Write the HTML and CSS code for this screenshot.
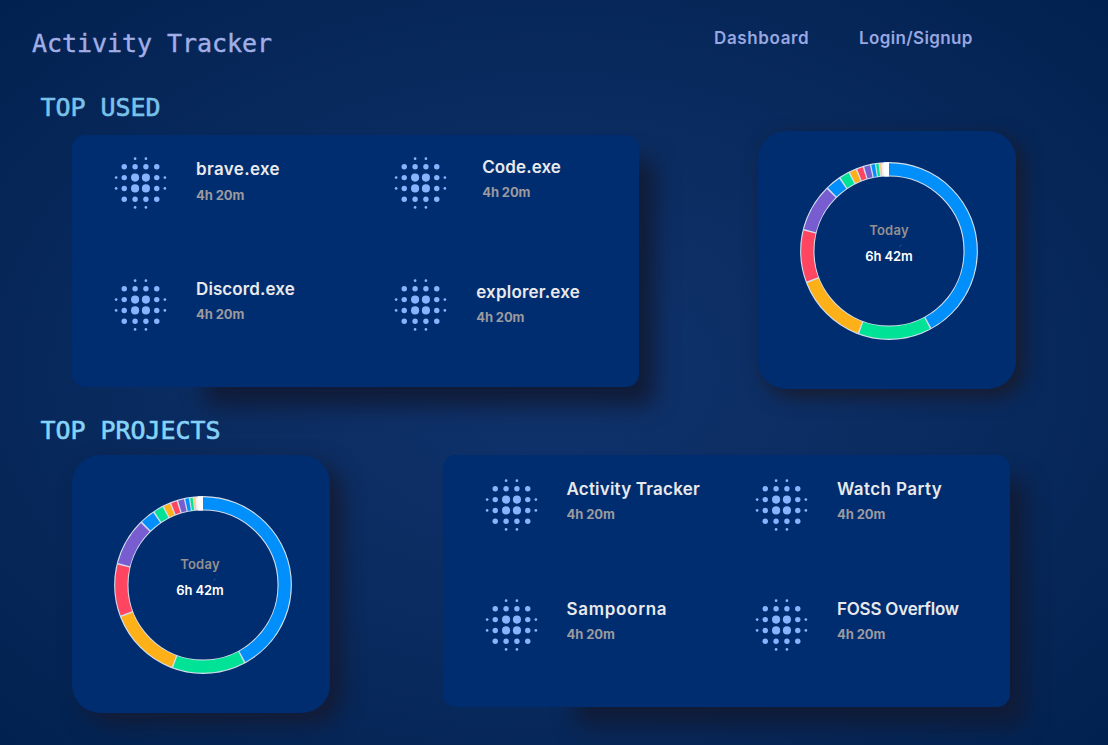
FILE: index.html
```html
<!DOCTYPE html>
<html lang="en">
<head>
<meta charset="utf-8">
<title>Activity Tracker</title>
<link rel="stylesheet" href="styles.css">
</head>
<body>
<svg class="defs" width="0" height="0">
  <symbol id="blur" viewBox="0 0 24 24">
    <g fill="#86b4ff">
      <circle cx="10" cy="10" r="1.5"/><circle cx="14" cy="10" r="1.5"/><circle cx="10" cy="14" r="1.5"/><circle cx="14" cy="14" r="1.5"/>
      <circle cx="6" cy="6" r="1"/><circle cx="10" cy="6" r="1"/><circle cx="14" cy="6" r="1"/><circle cx="18" cy="6" r="1"/>
      <circle cx="6" cy="10" r="1"/><circle cx="18" cy="10" r="1"/><circle cx="6" cy="14" r="1"/><circle cx="18" cy="14" r="1"/>
      <circle cx="6" cy="18" r="1"/><circle cx="10" cy="18" r="1"/><circle cx="14" cy="18" r="1"/><circle cx="18" cy="18" r="1"/>
      <circle cx="10" cy="3" r=".5"/><circle cx="14" cy="3" r=".5"/><circle cx="10" cy="21" r=".5"/><circle cx="14" cy="21" r=".5"/>
      <circle cx="3" cy="10" r=".5"/><circle cx="3" cy="14" r=".5"/><circle cx="21" cy="10" r=".5"/><circle cx="21" cy="14" r=".5"/>
    </g>
  </symbol>
  <symbol id="donut" viewBox="0 0 178 178">
    <g fill="none" transform="rotate(-90 89 89)">
      <circle cx="89" cy="89" r="81.7" stroke="#d3deec" stroke-width="14.4"/>
      <g stroke-width="12.2">
        <circle cx="89" cy="89" r="81.7" pathLength="360" stroke="#008ffb" stroke-dasharray="151.1 360" stroke-dashoffset="0"/>
        <circle cx="89" cy="89" r="81.7" pathLength="360" stroke="#00e396" stroke-dasharray="47.8 360" stroke-dashoffset="-152.1"/>
        <circle cx="89" cy="89" r="81.7" pathLength="360" stroke="#feb019" stroke-dasharray="47.7 360" stroke-dashoffset="-200.9"/>
        <circle cx="89" cy="89" r="81.7" pathLength="360" stroke="#ff4560" stroke-dasharray="33.9 360" stroke-dashoffset="-249.6"/>
        <circle cx="89" cy="89" r="81.7" pathLength="360" stroke="#775dd0" stroke-dasharray="30.5 360" stroke-dashoffset="-284.5"/>
        <circle cx="89" cy="89" r="81.7" pathLength="360" stroke="#008ffb" stroke-dasharray="9.5 360" stroke-dashoffset="-316"/>
        <circle cx="89" cy="89" r="81.7" pathLength="360" stroke="#00e396" stroke-dasharray="6.1 360" stroke-dashoffset="-326.5"/>
        <circle cx="89" cy="89" r="81.7" pathLength="360" stroke="#feb019" stroke-dasharray="4.2 360" stroke-dashoffset="-333.6"/>
        <circle cx="89" cy="89" r="81.7" pathLength="360" stroke="#ff4560" stroke-dasharray="3.7 360" stroke-dashoffset="-338.8"/>
        <circle cx="89" cy="89" r="81.7" pathLength="360" stroke="#775dd0" stroke-dasharray="3.9 360" stroke-dashoffset="-343.5"/>
        <circle cx="89" cy="89" r="81.7" pathLength="360" stroke="#008ffb" stroke-dasharray="2.4 360" stroke-dashoffset="-348.3"/>
        <circle cx="89" cy="89" r="81.7" pathLength="360" stroke="#00e396" stroke-dasharray="1.6 360" stroke-dashoffset="-351.5"/>
        <circle cx="89" cy="89" r="81.7" pathLength="360" stroke="#fecf78" stroke-dasharray="1 360" stroke-dashoffset="-353.8"/>
        <circle cx="89" cy="89" r="81.7" pathLength="360" stroke="#fbeef4" stroke-dasharray="1.8 360" stroke-dashoffset="-355"/>
        <circle cx="89" cy="89" r="81.7" pathLength="360" stroke="#ffffff" stroke-width="14.2" stroke-dasharray="3.6 360" stroke-dashoffset="-356.4"/>
      </g>
    </g>
    <path d="M99.5 84.5l2-1.5" stroke="#3c5f8f" stroke-width=".8"/>
  </symbol>
</svg>

<header class="topbar">
  <h1 class="mono title">Activity Tracker</h1>
  <nav class="nav">
    <a class="nav-dash">Dashboard</a>
    <a class="nav-login">Login/Signup</a>
  </nav>
</header>

<main>
  <section class="used">
    <h2 class="mono heading">TOP USED</h2>
    <div class="row">
      <div class="card list apps">
        <div class="item brave"><svg class="icon"><use href="#blur"/></svg><div class="info"><p class="name">brave.exe</p><p class="time">4h 20m</p></div></div>
        <div class="item code"><svg class="icon"><use href="#blur"/></svg><div class="info"><p class="name">Code.exe</p><p class="time">4h 20m</p></div></div>
        <div class="item discord"><svg class="icon"><use href="#blur"/></svg><div class="info"><p class="name">Discord.exe</p><p class="time">4h 20m</p></div></div>
        <div class="item explorer"><svg class="icon"><use href="#blur"/></svg><div class="info"><p class="name">explorer.exe</p><p class="time">4h 20m</p></div></div>
      </div>
      <div class="card chart">
        <svg class="ring"><use href="#donut"/></svg>
        <div class="label"><p class="today">Today</p><p class="total">6h 42m</p></div>
      </div>
    </div>
  </section>

  <section class="projects">
    <h2 class="mono heading">TOP PROJECTS</h2>
    <div class="row">
      <div class="card chart">
        <svg class="ring"><use href="#donut"/></svg>
        <div class="label"><p class="today">Today</p><p class="total">6h 42m</p></div>
      </div>
      <div class="card list">
        <div class="item tracker"><svg class="icon"><use href="#blur"/></svg><div class="info"><p class="name">Activity Tracker</p><p class="time">4h 20m</p></div></div>
        <div class="item watch"><svg class="icon"><use href="#blur"/></svg><div class="info"><p class="name">Watch Party</p><p class="time">4h 20m</p></div></div>
        <div class="item sampoorna"><svg class="icon"><use href="#blur"/></svg><div class="info"><p class="name">Sampoorna</p><p class="time">4h 20m</p></div></div>
        <div class="item foss"><svg class="icon"><use href="#blur"/></svg><div class="info"><p class="name">FOSS Overflow</p><p class="time">4h 20m</p></div></div>
      </div>
    </div>
  </section>
</main>
</body>
</html>
```
FILE: styles.css
```css
* { box-sizing: border-box; margin: 0; padding: 0; }
html { height: 100%; }
body {
  height: 745px;
  overflow: hidden;
  background: radial-gradient(ellipse farthest-corner at 50% 50%, #10336d 0%, #0a2b5f 50%, #012150 100%);
  font-family: Inter, "Open Sans", sans-serif;
  font-weight: 600;
  white-space: nowrap;
}
.defs { display: block; }
.mono {
  font: 400 25px/30px "DejaVu Sans Mono", monospace;
  letter-spacing: -0.05px;
}
.topbar {
  display: flex;
  height: 93px;
  padding: 29px 0 0 32px;
}
.title { width: 682px; color: #a2aee6; -webkit-text-stroke: .4px #a2aee6; }
.nav {
  display: flex;
  color: #98a7e0;
  font-size: 17px;
  line-height: 24px;
  margin-top: -3px;
}
.nav-dash { width: 145px; letter-spacing: .62px; }
.nav-login { letter-spacing: .35px; }
.heading { padding-left: 40.5px; color: #78c2ea; -webkit-text-stroke: .6px #78c2ea; }
.projects .heading { color: #85d3f8; -webkit-text-stroke-color: #85d3f8; }
.row {
  display: flex;
  align-items: flex-start;
  padding: 8px 0 0 72px;
  gap: 119px;
}
.projects { padding-top: 27px; }
.projects .row { padding-top: 9px; gap: 113px; }
.card { position: relative; background: #002d6f; }

.list {
  display: grid;
  grid-template-columns: 270.5px 1fr;
  grid-auto-rows: 120px;
  width: 567px;
  height: 252px;
  padding: 17px 0 0 36px;
  border-radius: 13px;
  z-index: 0;
  background: none;
}
.apps {
  grid-template-columns: 280.2px 1fr;
  grid-auto-rows: 122px;
  padding-top: 15px;
  margin-top: 4px;
}
/* drop shadow narrower than the panel, then the panel face */
.list::before {
  content: "";
  position: absolute;
  z-index: -2;
  left: 132px;
  top: 24px;
  right: -16px;
  bottom: -19px;
  background: #101b37;
  border-radius: 12px;
  filter: blur(11px);
}
.list::after {
  content: "";
  position: absolute;
  z-index: -1;
  inset: 0;
  background: #002d6f;
  border-radius: 13px;
}
.item { display: flex; align-items: flex-start; }
.icon { width: 65px; height: 66px; flex: none; }
.info { padding: 5px 0 0 23px; }
.name { color: #e9e9ec; font-size: 17px; line-height: 24px; letter-spacing: .1px; }
.time { margin-top: 3.4px; color: #9c9a9f; font-size: 13px; font-weight: 700; line-height: 20px; letter-spacing: -.1px; }
.brave .info { padding-top: 7px; }
.brave .time { margin-top: 4px; }
.code .info { padding: 4.5px 0 0 29px; }
.explorer .info { padding-top: 8px; }
.brave .name { letter-spacing: .35px; }
.explorer .name { letter-spacing: .2px; }
.tracker .name { letter-spacing: .2px; }
.watch .name { letter-spacing: .42px; }
.sampoorna .name { letter-spacing: .7px; }
.foss .name { letter-spacing: -.22px; }

.chart {
  display: grid;
  width: 257.5px;
  height: 258px;
  border-radius: 28px;
  box-shadow: 7px 7px 20px #1a1b2b;
}
.projects .chart { box-shadow: 11px 10px 22px #151b33; }
.ring, .label { grid-area: 1 / 1; }
.ring { width: 178px; height: 178px; margin: 31px 0 0 42px; }
.projects .ring { margin-top: 41px; }
.label {
  width: 100px;
  margin: 89px 0 0 81px;
  font-size: 13px;
  line-height: 20px;
  text-align: center;
}
.projects .label { margin: 99px 0 0 78px; }
.today { color: #96908f; letter-spacing: .25px; }
.total { margin-top: 6px; color: #fff; letter-spacing: -.1px; }
```
